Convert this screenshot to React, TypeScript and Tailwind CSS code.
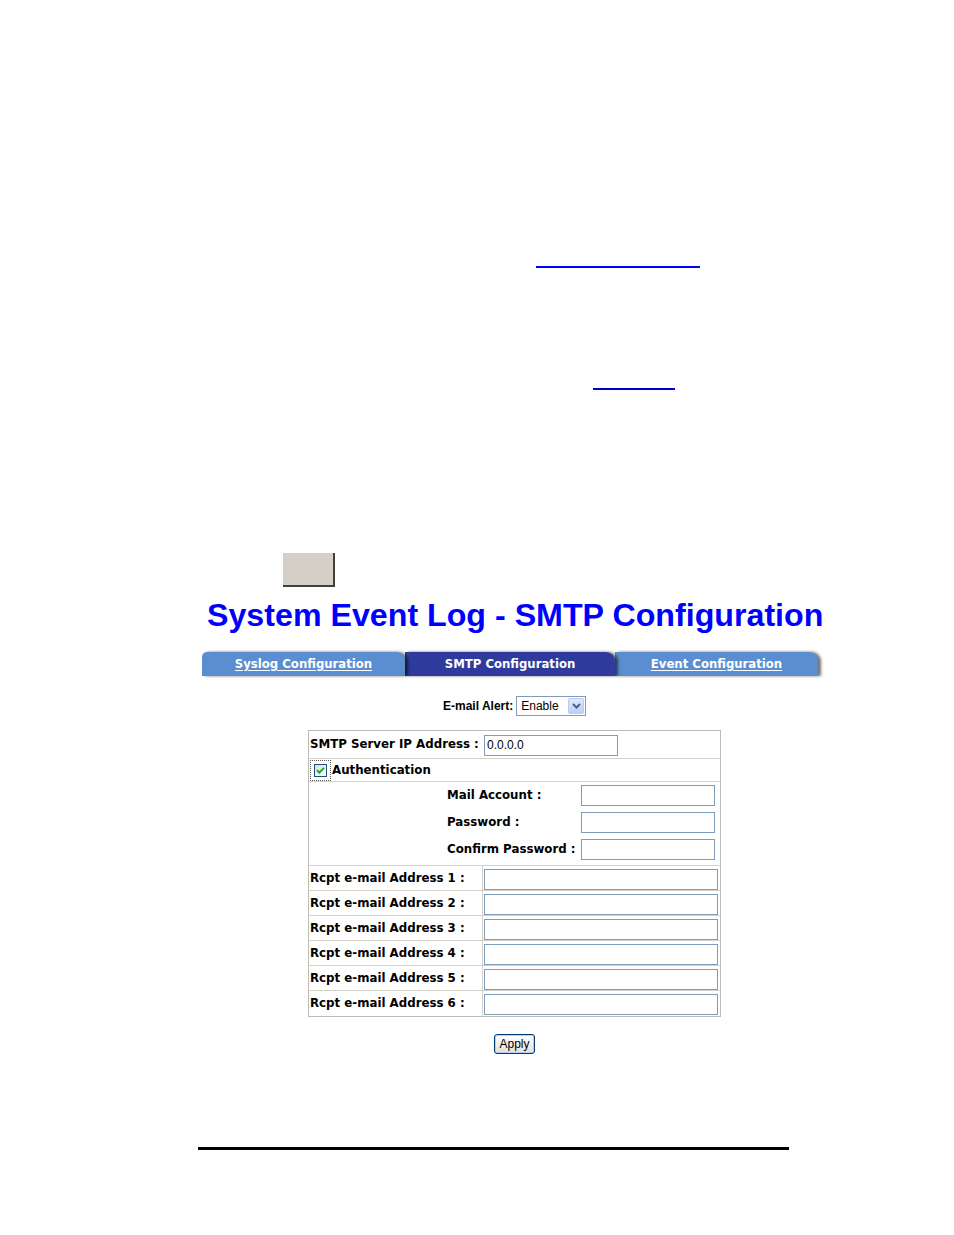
import React from "react";

const verdana = { fontFamily: '"DejaVu Sans", Verdana, sans-serif' };
const arial = { fontFamily: '"Liberation Sans", Arial, sans-serif' };

function XpCheckbox() {
  return (
    <div className="flex h-[21px] w-[21px] items-center justify-center border border-dotted border-[#555]">
      <svg width="13" height="13" viewBox="0 0 13 13">
        <defs>
          <linearGradient id="cbg" x1="0" y1="0" x2="1" y2="1">
            <stop offset="0" stopColor="#dcdcd7" />
            <stop offset="1" stopColor="#ffffff" />
          </linearGradient>
        </defs>
        <rect x="0.5" y="0.5" width="12" height="12" fill="url(#cbg)" stroke="#1c5180" />
        <path d="M3 6.2 L5.3 8.6 L10 3.8" fill="none" stroke="#21a121" strokeWidth="1.9" />
      </svg>
    </div>
  );
}

function TextBox({ w, value = "" }: { w: string; value?: string }) {
  return (
    <input
      readOnly
      defaultValue={value}
      className={`${w} h-[21px] border border-[#7f9db9] bg-white px-[2px] text-[12px] text-black outline-none`}
      style={arial}
    />
  );
}

function Tab({ label, active, z, first }: { label: string; active?: boolean; z: string; first?: boolean }) {
  return (
    <div
      className={`relative ${z} flex h-full items-center justify-center pt-[1px] rounded-tr-[9px] shadow-[3px_0_3px_rgba(0,0,0,0.55)] ${
        first ? "rounded-tl-[5px]" : ""
      } ${active ? "bg-[#2e3b9d]" : "bg-[#5b8ed1]"}`}
    >
      <span
        className={`text-[11.7px] font-bold text-white ${active ? "" : "underline underline-offset-2"}`}
        style={verdana}
      >
        {label}
      </span>
    </div>
  );
}

const rcpt = [1, 2, 3, 4, 5, 6];

export default function App() {
  return (
    <div className="relative h-[1235px] w-[954px] overflow-hidden bg-white" style={arial}>
      {/* stray link underlines from the document */}
      <div className="ml-[536px] mt-[266px] h-[2px] w-[164px] bg-[#0000ff]" />
      <div className="ml-[593px] mt-[120px] h-[2px] w-[82px] bg-[#0000cc]" />

      {/* blank button */}
      <div className="ml-[283px] mt-[163px] h-[34px] w-[52px] border-b-2 border-r-2 border-[#404040] bg-[#d4d0c8]" />

      <div className="ml-[207px] mt-[12px] text-[32.2px] font-bold leading-[32px] text-[#0000ff]">
        System Event Log - SMTP Configuration
      </div>

      {/* tabs */}
      <div className="ml-[202px] mt-[21px] grid h-[24px] w-[616px] grid-cols-[203px_210px_203px]">
        <Tab label="Syslog Configuration" z="z-30" first />
        <Tab label="SMTP Configuration" z="z-20" active />
        <Tab label="Event Configuration" z="z-10" />
      </div>

      {/* e-mail alert */}
      <div className="ml-[443px] mt-[20px] flex h-[20px] items-center gap-[3px]">
        <span className="text-[12px] font-bold text-black">E-mail Alert:</span>
        <div className="flex h-[20px] w-[70px] items-center justify-between border border-[#7f9db9] bg-white pl-[4px] pr-[1px]">
          <span className="text-[12px] text-black">Enable</span>
          <div className="flex h-[16px] w-[16px] items-center justify-center rounded-[2px] border border-[#b6c9f3] bg-gradient-to-b from-[#dde8fd] to-[#b9d1fa]">
            <svg width="9" height="6" viewBox="0 0 9 6">
              <path d="M1 1 L4.5 4.5 L8 1" fill="none" stroke="#4d6185" strokeWidth="2" />
            </svg>
          </div>
        </div>
      </div>

      {/* smtp table */}
      <div className="ml-[308px] mt-[14px] w-[413px] border border-[#bfbbb2]" style={verdana}>
        <div className="flex h-[28px] items-center border-b border-[#d4d0c8] pl-[1px] pt-[1px]">
          <span className="w-[174px] whitespace-nowrap text-[11.8px] font-bold text-black">SMTP Server IP Address :</span>
          <TextBox w="w-[134px]" value="0.0.0.0" />
        </div>
        <div className="flex h-[23px] items-center gap-[1px] border-b border-[#d4d0c8] pl-[1px] pt-[1px]">
          <XpCheckbox />
          <span className="text-[11.8px] font-bold text-black">Authentication</span>
        </div>
        <div className="flex h-[84px] flex-col border-b border-[#d4d0c8] pl-[138px]">
          {["Mail Account :", "Password :", "Confirm Password :"].map((l) => (
            <div key={l} className="flex h-[27px] items-center">
              <span className="w-[134px] whitespace-nowrap pt-[1px] text-[11.8px] font-bold text-black">{l}</span>
              <TextBox w="w-[134px]" />
            </div>
          ))}
        </div>
        {rcpt.map((n, i) => (
          <div
            key={n}
            className={`flex h-[25px] items-center ${i < rcpt.length - 1 ? "border-b border-[#d4d0c8]" : ""}`}
          >
            <div className="flex h-full w-[174px] items-center border-r border-[#d4d0c8] pl-[1px] pt-[1px]">
              <span className="whitespace-nowrap text-[11.8px] font-bold text-black">Rcpt e-mail Address {n} :</span>
            </div>
            <div className="ml-[1px]">
              <TextBox w="w-[234px]" />
            </div>
          </div>
        ))}
      </div>

      {/* apply */}
      <div className="ml-[494px] mt-[17px] flex h-[20px] w-[41px] items-center justify-center rounded-[3px] border border-[#003c74] bg-gradient-to-b from-white to-[#e3e1d6] shadow-[inset_0_0_0_1px_#b4ceff]">
        <span className="text-[12px] text-black">Apply</span>
      </div>

      {/* footer rule */}
      <div className="ml-[198px] mt-[93px] h-[3px] w-[591px] bg-black" />
    </div>
  );
}
